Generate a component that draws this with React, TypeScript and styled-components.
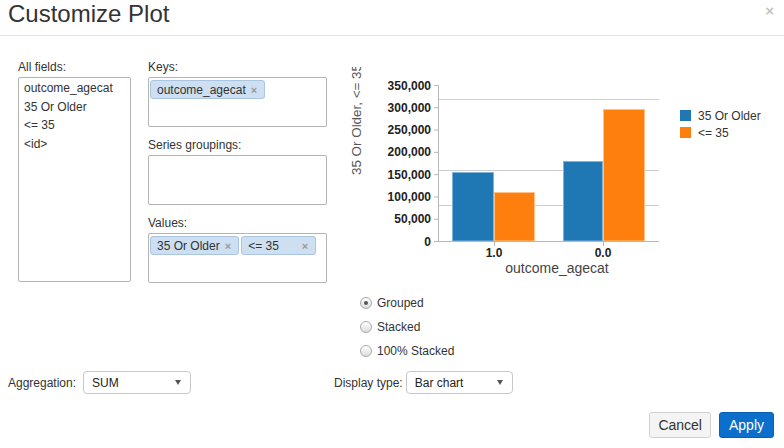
import React from "react";
import styled, { createGlobalStyle } from "styled-components";

const Global = createGlobalStyle`
  html, body { margin: 0; padding: 0; background: #fff; }
  body {
    font-family: "Liberation Sans", Arial, sans-serif;
    font-size: 12px;
    color: #333;
    width: 784px;
    overflow: hidden;
  }
  * { box-sizing: border-box; }
`;

const Page = styled.div`
  width: 784px;
  height: 448px;
  display: flex;
  flex-direction: column;
`;

const Header = styled.div`
  height: 36px;
  border-bottom: 1px solid #e5e5e5;
  display: flex;
  justify-content: space-between;
  align-items: flex-start;
  padding: 0 10px 0 8px;
`;

const Title = styled.h1`
  margin: 0;
  font-size: 24px;
  line-height: 28px;
  font-weight: normal;
  color: #333;
`;

const Close = styled.span`
  margin-top: 3px;
  font-size: 15px;
  line-height: 16px;
  font-weight: bold;
  color: #c4c4c4;
`;

const Main = styled.div`
  display: flex;
  padding-left: 18px;
`;

const FieldColumn = styled.div<{ $width: number; $gapLeft: number }>`
  width: ${(p) => p.$width}px;
  margin-left: ${(p) => p.$gapLeft}px;
  padding-top: 24px;
  display: flex;
  flex-direction: column;
`;

const Label = styled.div<{ $spaced?: boolean }>`
  line-height: 15px;
  margin-bottom: 2px;
  margin-top: ${(p) => (p.$spaced ? 11 : 0)}px;
  color: #333;
`;

const ListBox = styled.div`
  height: 205px;
  border: 1px solid #b4b4b4;
  border-radius: 2px;
  padding: 1px 0 0 5px;
`;

const ListItem = styled.div`
  line-height: 18.5px;
  color: #333;
`;

const DropBox = styled.div`
  height: 50px;
  border: 1px solid #b4b4b4;
  border-radius: 2px;
  padding: 2px 1px;
  display: flex;
  flex-wrap: wrap;
  align-content: flex-start;
  gap: 2px;
`;

const Chip = styled.span<{ $width?: number }>`
  display: inline-flex;
  align-items: center;
  justify-content: space-between;
  height: 19px;
  ${(p) => (p.$width ? `width: ${p.$width}px;` : "")}
  padding: 0 7px 0 6px;
  background: #cddff0;
  border: 1px solid #a9c5df;
  border-radius: 3px;
  color: #333;
  font-size: 12px;
`;

const ChipX = styled.span`
  margin-left: 5px;
  font-size: 11px;
  color: #9a9a9a;
  font-weight: bold;
`;

const ChartColumn = styled.div`
  margin-left: 13px;
  width: 444px;
  padding-top: 26px;
  display: flex;
  flex-direction: column;
`;

const ChartSvg = styled.svg`
  display: block;
  overflow: hidden;
`;

const RadioGroup = styled.div`
  margin-top: 9px;
  padding-left: 20px;
  display: flex;
  flex-direction: column;
`;

const RadioRow = styled.label`
  height: 24px;
  display: flex;
  align-items: center;
  gap: 5px;
  color: #333;
`;

const RadioDot = styled.span<{ $checked?: boolean }>`
  width: 12px;
  height: 12px;
  border-radius: 50%;
  border: 1px solid #a8a8a8;
  background: linear-gradient(#ffffff, #dcdcdc);
  display: inline-flex;
  align-items: center;
  justify-content: center;
  &::after {
    content: "";
    width: 4px;
    height: 4px;
    border-radius: 50%;
    background: ${(p) => (p.$checked ? "#555" : "transparent")};
  }
`;

const BottomRow = styled.div`
  margin-top: 8px;
  padding-left: 8px;
  display: flex;
  align-items: center;
`;

const SelectGroup = styled.div<{ $width?: number; $gap: number }>`
  display: flex;
  align-items: center;
  gap: ${(p) => p.$gap}px;
  ${(p) => (p.$width ? `width: ${p.$width}px;` : "")}
`;

const Select = styled.div<{ $width: number }>`
  width: ${(p) => p.$width}px;
  height: 23px;
  border: 1px solid #c8c8c8;
  border-radius: 4px;
  display: flex;
  align-items: center;
  justify-content: space-between;
  padding: 0 9px 0 8px;
  color: #222;
  background: #fff;
`;

const Caret = styled.span`
  width: 0;
  height: 0;
  border-left: 3px solid transparent;
  border-right: 3px solid transparent;
  border-top: 5px solid #555;
`;

const Footer = styled.div`
  margin-top: 18px;
  padding-right: 10px;
  display: flex;
  justify-content: flex-end;
  gap: 8px;
`;

const Button = styled.button<{ $primary?: boolean }>`
  height: 26px;
  padding: 0 ${(p) => (p.$primary ? 9 : 8)}px;
  font-family: "Liberation Sans", Arial, sans-serif;
  font-size: 14px;
  border-radius: 3px;
  border: 1px solid ${(p) => (p.$primary ? "#0a5fb0" : "#d0d0d0")};
  background: ${(p) => (p.$primary ? "#0b6fcb" : "#f4f4f4")};
  color: ${(p) => (p.$primary ? "#fff" : "#333")};
`;

const ticks = [0, 50000, 100000, 150000, 200000, 250000, 300000, 350000];
const AX = 98;
const AY = 179;
const TOP = 23;
const RIGHT = 319;
const step = (AY - TOP) / 7;

const bars = [
  { x: 112, w: 42, top: 110, color: "#1f77b4", stroke: "#7fb3d9" },
  { x: 154, w: 41, top: 130, color: "#ff7f0e", stroke: "#ffc38a" },
  { x: 223, w: 40, top: 99, color: "#1f77b4", stroke: "#7fb3d9" },
  { x: 263, w: 42, top: 47, color: "#ff7f0e", stroke: "#ffc38a" },
];

function Chart() {
  return (
    <ChartSvg width={444} height={220} viewBox="0 0 444 220">
      <defs>
        <clipPath id="titleClip">
          <rect x={0} y={5} width={40} height={200} />
        </clipPath>
      </defs>
      <g clipPath="url(#titleClip)">
        <text
          transform="translate(21,113) rotate(-90)"
          fontSize={13.4}
          fill="#555"
          fontFamily="Liberation Sans, Arial, sans-serif"
        >
          35 Or Older, &lt;= 35
        </text>
      </g>
      {[37, 108, 143].map((y) => (
        <line key={y} x1={AX} x2={RIGHT} y1={y + 0.5} y2={y + 0.5} stroke="#cfcfcf" />
      ))}
      {bars.map((b, i) => (
        <rect
          key={i}
          x={b.x + 0.5}
          y={b.top + 0.5}
          width={b.w - 1}
          height={AY - b.top - 0.5}
          fill={b.color}
          stroke={b.stroke}
          strokeWidth={1}
        />
      ))}
      <line x1={AX + 0.5} x2={AX + 0.5} y1={TOP} y2={AY} stroke="#b8b8b8" />
      <line x1={AX} x2={RIGHT} y1={AY + 0.5} y2={AY + 0.5} stroke="#b8b8b8" />
      {ticks.map((t, i) => {
        const y = AY - i * step;
        return (
          <g key={t}>
            <line x1={AX - 4} x2={AX} y1={y + 0.5} y2={y + 0.5} stroke="#b8b8b8" />
            <text
              x={AX - 7}
              y={y + 4.5}
              textAnchor="end"
              fontSize={12}
              fontWeight="bold"
              fill="#222"
              fontFamily="Liberation Sans, Arial, sans-serif"
            >
              {t.toLocaleString("en-US")}
            </text>
          </g>
        );
      })}
      {[
        { x: 154, l: "1.0" },
        { x: 263, l: "0.0" },
      ].map((t) => (
        <g key={t.l}>
          <line x1={t.x + 0.5} x2={t.x + 0.5} y1={AY} y2={AY + 5} stroke="#b8b8b8" />
          <text
            x={t.x}
            y={195}
            textAnchor="middle"
            fontSize={12}
            fontWeight="bold"
            fill="#222"
            fontFamily="Liberation Sans, Arial, sans-serif"
          >
            {t.l}
          </text>
        </g>
      ))}
      <text
        x={217}
        y={211}
        textAnchor="middle"
        fontSize={14}
        fill="#444"
        fontFamily="Liberation Sans, Arial, sans-serif"
      >
        outcome_agecat
      </text>
      <rect x={340} y={48} width={11} height={11} fill="#1f77b4" />
      <text x={358} y={58} fontSize={12} fill="#333" fontFamily="Liberation Sans, Arial, sans-serif">
        35 Or Older
      </text>
      <rect x={340} y={65} width={11} height={11} fill="#ff7f0e" />
      <text x={358} y={75} fontSize={12} fill="#333" fontFamily="Liberation Sans, Arial, sans-serif">
        &lt;= 35
      </text>
    </ChartSvg>
  );
}

export default function App() {
  return (
    <Page>
      <Global />
      <Header>
        <Title>Customize Plot</Title>
        <Close>×</Close>
      </Header>
      <Main>
        <FieldColumn $width={113} $gapLeft={0}>
          <Label>All fields:</Label>
          <ListBox>
            <ListItem>outcome_agecat</ListItem>
            <ListItem>35 Or Older</ListItem>
            <ListItem>&lt;= 35</ListItem>
            <ListItem>&lt;id&gt;</ListItem>
          </ListBox>
        </FieldColumn>
        <FieldColumn $width={179} $gapLeft={17}>
          <Label>Keys:</Label>
          <DropBox>
            <Chip>
              outcome_agecat<ChipX>×</ChipX>
            </Chip>
          </DropBox>
          <Label $spaced>Series groupings:</Label>
          <DropBox />
          <Label $spaced>Values:</Label>
          <DropBox>
            <Chip>
              35 Or Older<ChipX>×</ChipX>
            </Chip>
            <Chip $width={75}>
              &lt;= 35<ChipX>×</ChipX>
            </Chip>
          </DropBox>
        </FieldColumn>
        <ChartColumn>
          <Chart />
          <RadioGroup>
            <RadioRow>
              <RadioDot $checked />
              Grouped
            </RadioRow>
            <RadioRow>
              <RadioDot />
              Stacked
            </RadioRow>
            <RadioRow>
              <RadioDot />
              100% Stacked
            </RadioRow>
          </RadioGroup>
        </ChartColumn>
      </Main>
      <BottomRow>
        <SelectGroup $width={326} $gap={7}>
          Aggregation:
          <Select $width={108}>
            SUM
            <Caret />
          </Select>
        </SelectGroup>
        <SelectGroup $gap={3}>
          Display type:
          <Select $width={107}>
            Bar chart
            <Caret />
          </Select>
        </SelectGroup>
      </BottomRow>
      <Footer>
        <Button>Cancel</Button>
        <Button $primary>Apply</Button>
      </Footer>
    </Page>
  );
}
